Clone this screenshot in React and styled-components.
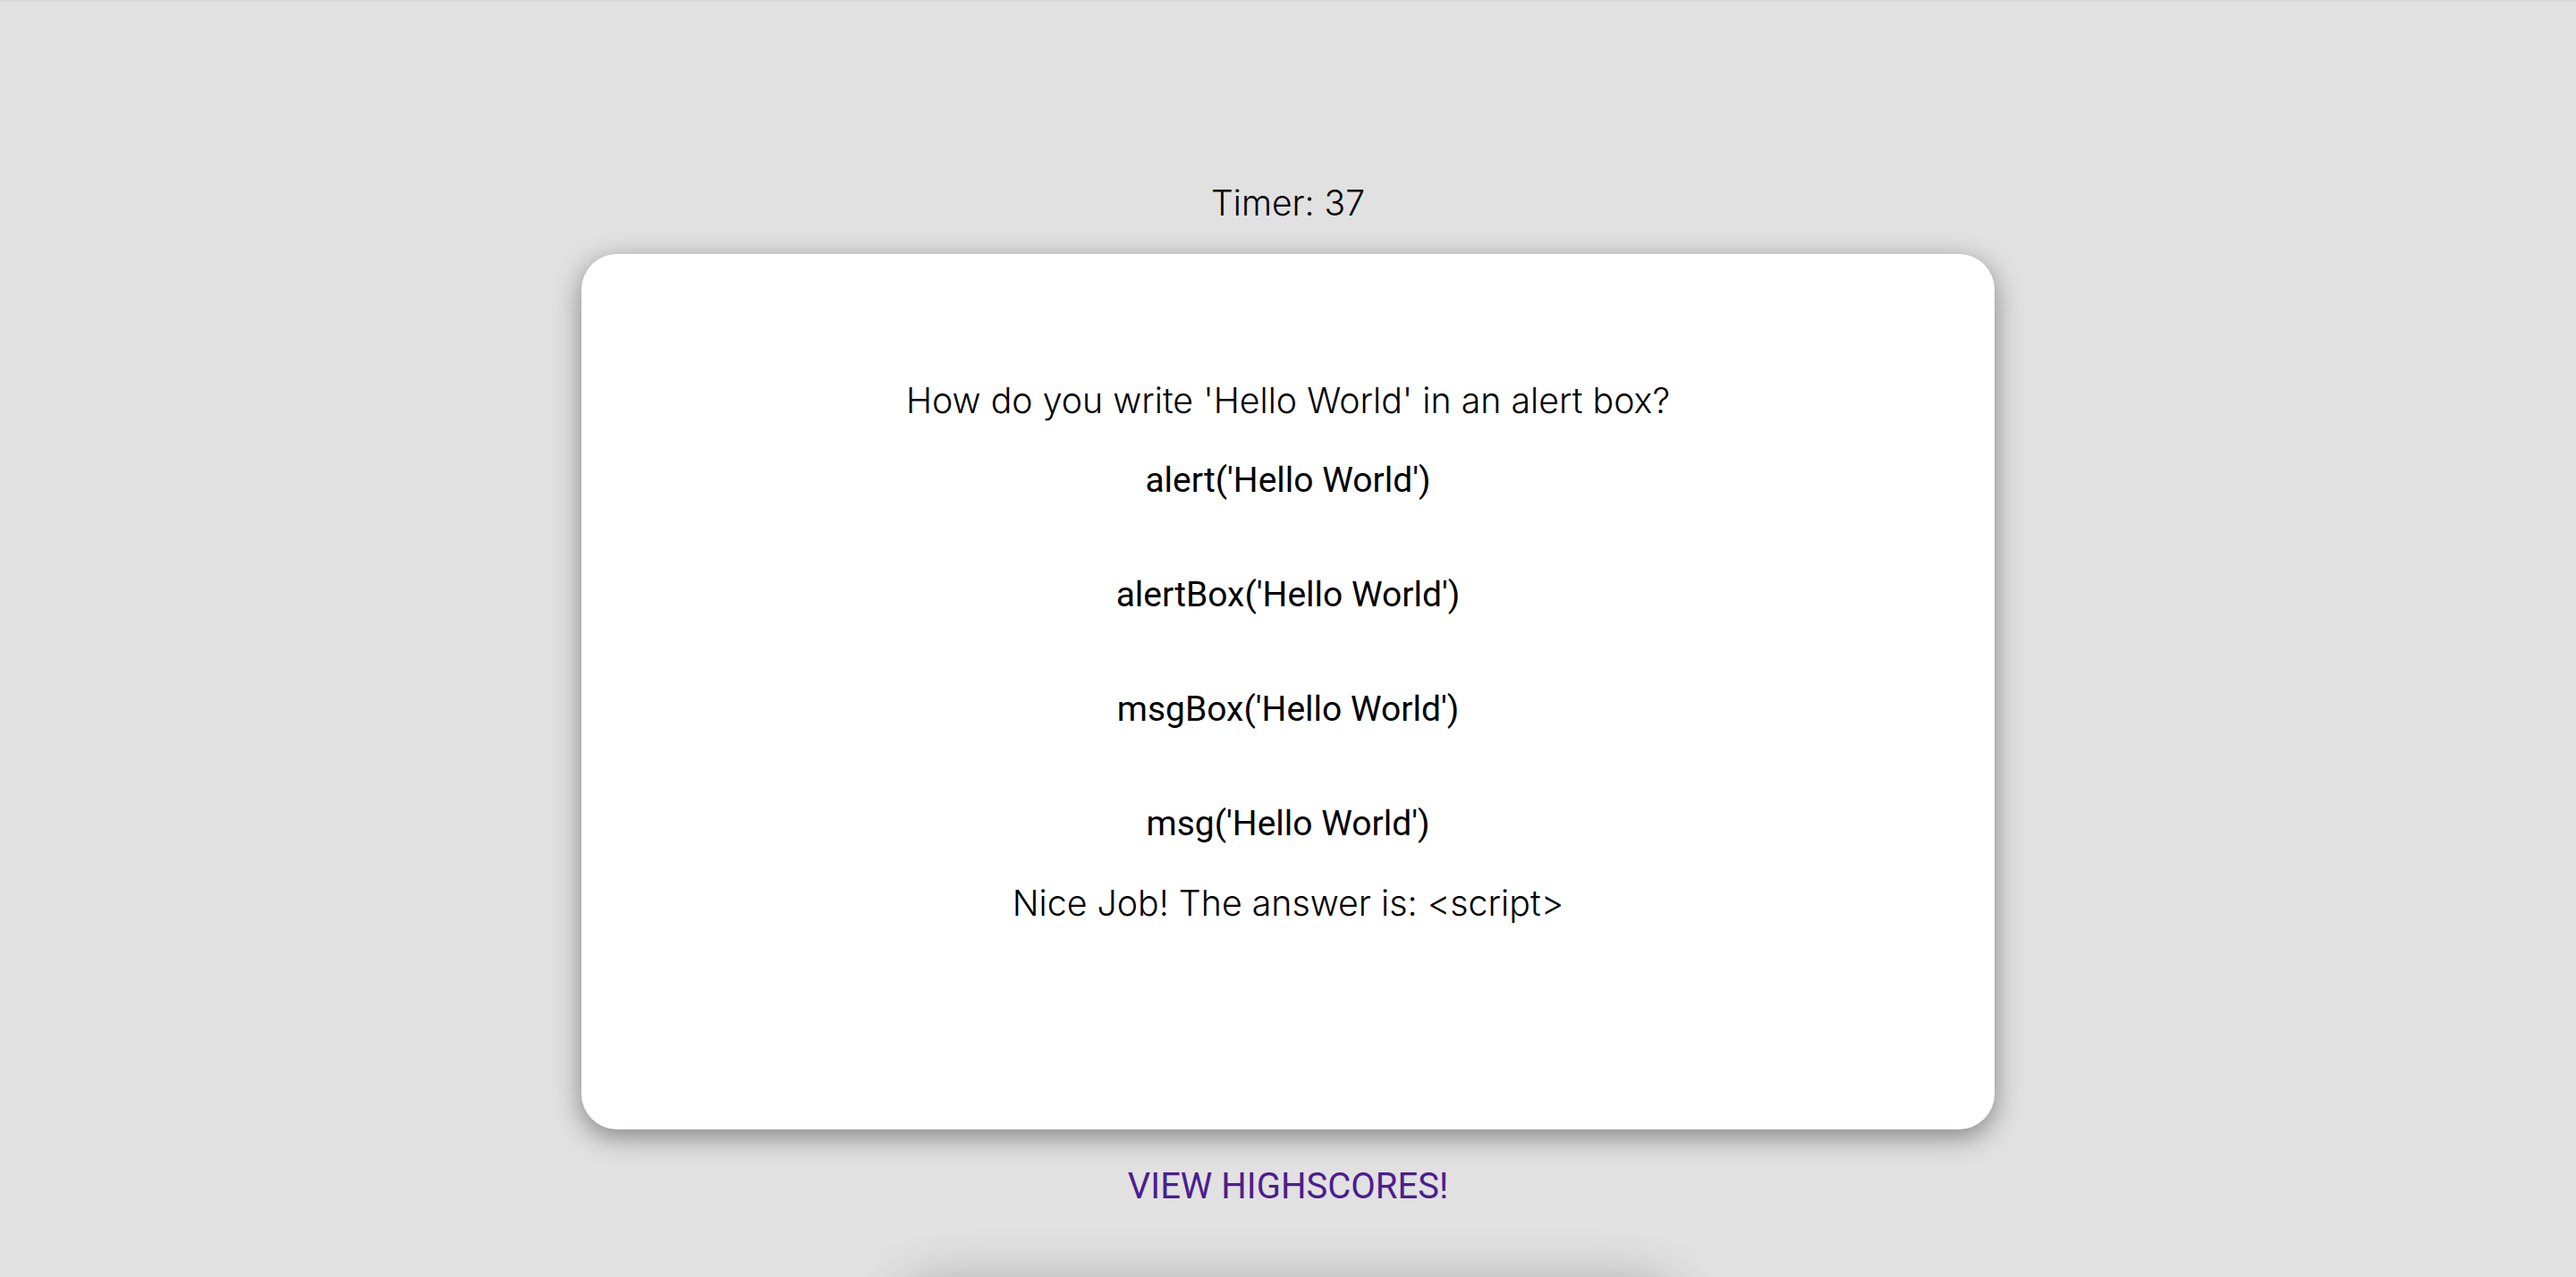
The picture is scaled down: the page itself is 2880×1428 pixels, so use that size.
import styled, { createGlobalStyle } from 'styled-components';

const GlobalStyle = createGlobalStyle`
  * {
    box-sizing: border-box;
  }

  body {
    margin: 0;
    background-color: #e1e1e1;
    font-family: Inter, 'Noto Sans', sans-serif;
    color: #000;
  }
`;

const Page = styled.main`
  align-items: center;
  border-top: 2px solid #d7d7d7;
  display: flex;
  flex-direction: column;
  min-height: 100vh;
  overflow: hidden;
  padding-top: 201px;
`;

const Timer = styled.p`
  font-size: 39px;
  font-weight: 300;
  line-height: 48px;
  margin: 0 0 33px;
`;

const QuizCard = styled.section`
  align-items: center;
  background-color: #fff;
  border-radius: 40px;
  box-shadow: 0 8px 30px rgba(0, 0, 0, 0.42);
  display: flex;
  flex-direction: column;
  gap: 41px;
  height: 979px;
  padding-top: 140px;
  width: 1580px;
`;

const Question = styled.h2`
  font-size: 39.3px;
  font-weight: 300;
  line-height: 48px;
  margin: 0;
  text-align: center;
`;

const AnswerList = styled.ul`
  align-items: center;
  display: flex;
  flex-direction: column;
  gap: 80px;
  list-style: none;
  margin: 0;
  padding: 0;
`;

const AnswerButton = styled.button`
  background: none;
  border: 0;
  color: #000;
  cursor: pointer;
  font-family: Roboto, 'Liberation Sans', sans-serif;
  font-size: 39px;
  font-weight: 400;
  line-height: 48px;
  padding: 0;
`;

const Feedback = styled.p`
  font-size: 39.3px;
  font-weight: 300;
  line-height: 48px;
  margin: 0;
`;

const HighscoreLink = styled.a`
  color: #4c1d8f;
  font-family: Roboto, 'Liberation Sans', sans-serif;
  font-size: 40px;
  line-height: 48px;
  margin-top: 40px;
  text-decoration: none;
  text-transform: uppercase;
`;

const HighscoreCard = styled.section`
  background-color: #e1e1e1;
  border-radius: 40px;
  box-shadow: 0 0 60px rgba(0, 0, 0, 0.3);
  height: 400px;
  margin-top: 88px;
  width: 864px;
`;

const answers = [
  "alert('Hello World')",
  "alertBox('Hello World')",
  "msgBox('Hello World')",
  "msg('Hello World')",
];

const App = () => {
  return (
    <>
      <GlobalStyle />
      <Page>
        <Timer>Timer: 37</Timer>
        <QuizCard>
          <Question>How do you write 'Hello World' in an alert box?</Question>
          <AnswerList>
            {answers.map((answer) => (
              <li key={answer}>
                <AnswerButton type="button">{answer}</AnswerButton>
              </li>
            ))}
          </AnswerList>
          <Feedback>Nice Job! The answer is: &lt;script&gt;</Feedback>
        </QuizCard>
        <HighscoreLink href="#highscores">View Highscores!</HighscoreLink>
        <HighscoreCard />
      </Page>
    </>
  );
};

export default App;
